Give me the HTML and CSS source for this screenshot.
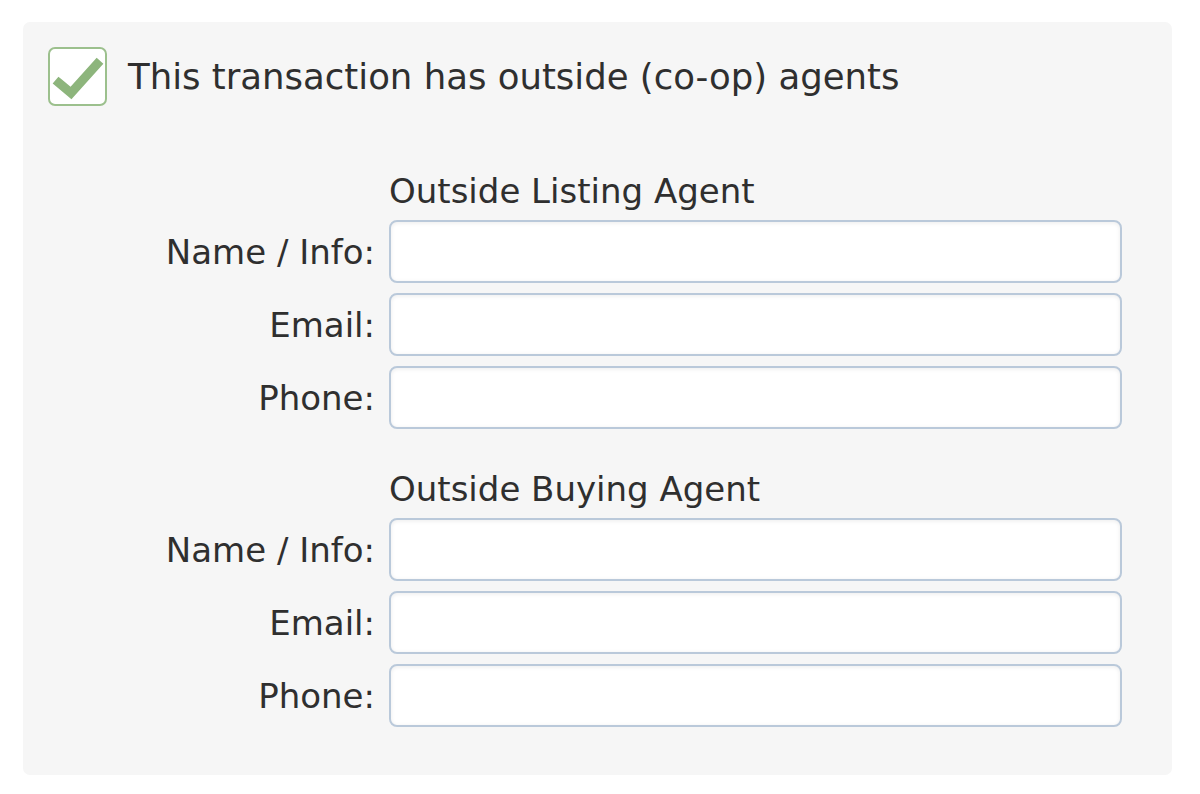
FILE: index.html
```html
<!DOCTYPE html>
<html>
<head>
<meta charset="utf-8">
<link rel="stylesheet" href="styles.css">
</head>
<body>
<div class="panel">
  <label class="coop">
    <span class="checkbox">
      <svg viewBox="0 0 55 55" width="55" height="55"><path d="M9 34 L21 44 L47 15" fill="none" stroke="#8db57c" stroke-width="9" stroke-linecap="square" stroke-linejoin="miter"/></svg>
    </span>
    <span class="coop-text">This transaction has outside (co-op) agents</span>
  </label>

  <div class="section">
    <div class="heading">Outside Listing Agent</div>
    <div class="row"><span class="label">Name / Info:</span><input class="field" type="text"></div>
    <div class="row"><span class="label">Email:</span><input class="field" type="text"></div>
    <div class="row"><span class="label">Phone:</span><input class="field" type="text"></div>
  </div>

  <div class="section second">
    <div class="heading">Outside Buying Agent</div>
    <div class="row"><span class="label">Name / Info:</span><input class="field" type="text"></div>
    <div class="row"><span class="label">Email:</span><input class="field" type="text"></div>
    <div class="row"><span class="label">Phone:</span><input class="field" type="text"></div>
  </div>
</div>
</body>
</html>
```
FILE: styles.css
```css
html, body {
  margin: 0;
  padding: 0;
  background: #ffffff;
}
body {
  padding: 22px 28px 0 23px;
  font-family: "DejaVu Sans", "Open Sans", sans-serif;
  color: #2f2f2f;
}
.panel {
  box-sizing: border-box;
  width: 1149px;
  height: 753px;
  background: #f6f6f6;
  border-radius: 7px;
  padding: 25px 50px 50px 25px;
}
.coop {
  display: flex;
  align-items: center;
  gap: 21px;
  height: 59px;
}
.checkbox {
  box-sizing: border-box;
  width: 59px;
  height: 59px;
  border: 2px solid #9cc08d;
  border-radius: 7px;
  background: #ffffff;
  display: flex;
  align-items: center;
  justify-content: center;
}
.checkbox svg { filter: blur(0.6px); }
.coop-text {
  font-size: 35.5px;
  line-height: 42px;
}
.section {
  margin-top: 64px;
  display: flex;
  flex-direction: column;
  gap: 10px;
}
.section.second { margin-top: 39px; }
.heading {
  margin-left: 341px;
  font-size: 34px;
  line-height: 42px;
  margin-bottom: -2px;
}
.row {
  display: flex;
  align-items: center;
  gap: 14px;
}
.label {
  width: 327px;
  text-align: right;
  font-size: 34px;
  line-height: 42px;
}
.field {
  box-sizing: border-box;
  width: 733px;
  height: 63px;
  margin: 0;
  border: 2px solid #bac9da;
  border-radius: 8px;
  background: #ffffff;
  box-shadow: inset 0 1px 4px rgba(0, 0, 0, 0.08);
  outline: none;
}
```
